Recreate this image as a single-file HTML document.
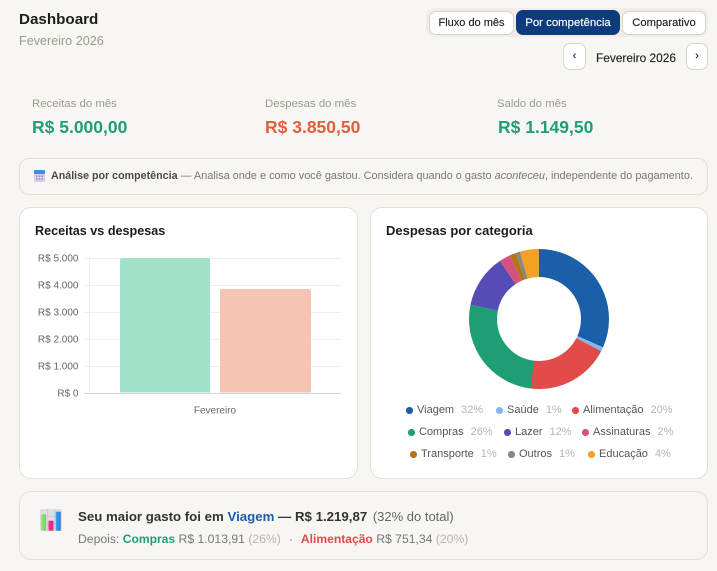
<!DOCTYPE html>
<html lang="pt-BR"><head><meta charset="utf-8"><title>Dashboard</title>
<style>
html,body{margin:0;padding:0;background:#f8f6f3;}
body{width:717px;height:571px;position:relative;overflow:hidden;font-family:"Liberation Sans",Arial,sans-serif;color:#1f1f1f;}
.a{position:absolute;white-space:nowrap;}
.box{position:absolute;box-sizing:border-box;border:1px solid #e2dfd8;}
.btn{position:absolute;box-sizing:border-box;background:#fff;border:1px solid #d8d4cc;border-radius:7px;text-align:center;font-size:11px;color:#1f1f1f;-webkit-text-stroke:.15px currentColor;}
.lab{font-size:11.4px;color:#9b9a95;line-height:16px;}
.val{font-size:17.5px;font-weight:700;line-height:22px;}
.leg{font-size:11px;color:#555;line-height:14px;}
.leg i{font-style:normal;color:#b5b5b0;margin-left:7px;}
.dot{position:absolute;width:6.5px;height:6.5px;border-radius:50%;}
</style></head><body>

<div class="a" style="left:19px;top:10px;font-size:15.2px;font-weight:700;line-height:20px;color:#1c1c1c;">Dashboard</div>
<div class="a" style="left:19px;top:33px;font-size:12.6px;line-height:16px;color:#9b9a95;">Fevereiro 2026</div>

<div class="a" style="left:426px;top:8px;width:282px;height:29px;background:#f0ede8;border-radius:8px;"></div>
<div class="btn" style="left:429px;top:11px;width:85px;height:24px;line-height:22px;">Fluxo do mês</div>
<div class="btn" style="left:516px;top:10px;width:104px;height:25px;line-height:24px;background:#0d3b7d;border-color:#0d3b7d;color:#fff;font-size:11.4px;">Por competência</div>
<div class="btn" style="left:622px;top:11px;width:84px;height:24px;line-height:22px;font-size:11.2px;">Comparativo</div>
<div class="btn" style="left:563px;top:43px;width:23px;height:27px;line-height:24px;">‹</div>
<div class="a" style="left:596px;top:50px;font-size:11.9px;line-height:16px;color:#1f1f1f;-webkit-text-stroke:.15px currentColor;">Fevereiro 2026</div>
<div class="btn" style="left:686px;top:43px;width:22px;height:27px;line-height:24px;">›</div>

<div class="a lab" style="left:32px;top:96px;">Receitas do mês</div>
<div class="a val" style="left:32px;top:116px;color:#1f9e78;">R$ 5.000,00</div>
<div class="a lab" style="left:265px;top:96px;">Despesas do mês</div>
<div class="a val" style="left:265px;top:116px;color:#e0603a;">R$ 3.850,50</div>
<div class="a lab" style="left:497px;top:96px;">Saldo do mês</div>
<div class="a val" style="left:498px;top:116px;color:#1f9e78;">R$ 1.149,50</div>

<div class="box" style="left:19px;top:158px;width:689px;height:37px;border-radius:10px;"></div>
<svg class="a" style="left:34px;top:170px;" width="11" height="12" viewBox="0 0 11 12">
<rect x="0" y="0" width="11" height="12" rx="1" fill="#d9cdea"/>
<rect x="0" y="0" width="11" height="4" rx="1" fill="#3f8cef"/>
<g fill="#8b86b8"><rect x="2" y="5.5" width="1.5" height="1.3"/><rect x="4.7" y="5.5" width="1.5" height="1.3"/><rect x="7.4" y="5.5" width="1.5" height="1.3"/><rect x="2" y="8.3" width="1.5" height="1.3"/><rect x="4.7" y="8.3" width="1.5" height="1.3"/><rect x="7.4" y="8.3" width="1.5" height="1.3"/></g>
</svg>
<div class="a" style="left:51px;top:168px;font-size:10.92px;line-height:16px;color:#777;"><b style="color:#4a4a4a;font-size:10.7px;">Análise por competência</b> — Analisa onde e como você gastou. Considera quando o gasto <em>aconteceu</em>, independente do pagamento.</div>

<div class="box" style="left:19px;top:207px;width:339px;height:272px;border-radius:12px;background:#fff;"></div>
<div class="a" style="left:35px;top:222px;font-size:12.6px;font-weight:700;line-height:18px;color:#1c1c1c;">Receitas vs despesas</div>

<svg class="a" style="left:30px;top:250px;" width="320" height="170" viewBox="30 250 320 170">
<g stroke="#f0eeea" stroke-width="1">
<path d="M84 258.5H341M84 285.5H341M84 312.5H341M84 339.5H341M84 366.5H341"/>
<path d="M89.5 258V393"/>
</g>
<path d="M84 393.5H341" stroke="#d6d4d2" stroke-width="1"/>
<path d="M120 392.5V260a2 2 0 0 1 2-2H208a2 2 0 0 1 2 2V392.5Z" fill="#a2e2cb"/>
<path d="M220 392.5V291a2 2 0 0 1 2-2H309a2 2 0 0 1 2 2V392.5Z" fill="#f5c4b3"/>
<g font-family="Liberation Sans,Arial,sans-serif" font-size="10" fill="#666" text-anchor="end">
<text x="78.5" y="261.5">R$ 5.000</text>
<text x="78.5" y="288.5">R$ 4.000</text>
<text x="78.5" y="315.5">R$ 3.000</text>
<text x="78.5" y="342.5">R$ 2.000</text>
<text x="78.5" y="369.5">R$ 1.000</text>
<text x="78.5" y="396.5">R$ 0</text>
</g>
<text x="215" y="413.5" font-family="Liberation Sans,Arial,sans-serif" font-size="10" fill="#666" text-anchor="middle">Fevereiro</text>
</svg>

<div class="box" style="left:370px;top:207px;width:338px;height:272px;border-radius:12px;background:#fff;"></div>
<div class="a" style="left:386px;top:222px;font-size:13px;font-weight:700;line-height:18px;color:#1c1c1c;">Despesas por categoria</div>

<svg class="a" style="left:459px;top:239px;" width="160" height="160" viewBox="-80 -80 160 160">
<g fill="none" stroke-width="28" transform="rotate(-90)">
<circle r="56" pathLength="360" stroke="#1a5fa8" stroke-dasharray="114 246" stroke-dashoffset="0"/>
<circle r="56" pathLength="360" stroke="#85b7eb" stroke-dasharray="3.4 356.6" stroke-dashoffset="-114"/>
<circle r="56" pathLength="360" stroke="#e24b4a" stroke-dasharray="70.2 289.8" stroke-dashoffset="-117.4"/>
<circle r="56" pathLength="360" stroke="#1d9e75" stroke-dasharray="94.8 265.2" stroke-dashoffset="-187.1"/>
<circle r="56" pathLength="360" stroke="#574bb5" stroke-dasharray="44.4 315.6" stroke-dashoffset="-281.9"/>
<circle r="56" pathLength="360" stroke="#d4527f" stroke-dasharray="9.2 350.8" stroke-dashoffset="-326.3"/>
<circle r="56" pathLength="360" stroke="#b8731a" stroke-dasharray="5.3 354.7" stroke-dashoffset="-335.5"/>
<circle r="56" pathLength="360" stroke="#888780" stroke-dasharray="3.6 356.4" stroke-dashoffset="-340.8"/>
<circle r="56" pathLength="360" stroke="#f2a026" stroke-dasharray="15.6 344.4" stroke-dashoffset="-344.4"/>
</g>
</svg>

<span class="dot" style="left:406px;top:407px;background:#1a5fa8;"></span><div class="a leg" style="left:417px;top:403px;">Viagem<i>32%</i></div>
<span class="dot" style="left:496px;top:407px;background:#85b7eb;"></span><div class="a leg" style="left:507px;top:403px;">Saúde<i>1%</i></div>
<span class="dot" style="left:572px;top:407px;background:#e24b4a;"></span><div class="a leg" style="left:583px;top:403px;">Alimentação<i>20%</i></div>
<span class="dot" style="left:408px;top:429px;background:#1d9e75;"></span><div class="a leg" style="left:419px;top:425px;">Compras<i>26%</i></div>
<span class="dot" style="left:504px;top:429px;background:#574bb5;"></span><div class="a leg" style="left:515px;top:425px;">Lazer<i>12%</i></div>
<span class="dot" style="left:582px;top:429px;background:#d4527f;"></span><div class="a leg" style="left:593px;top:425px;">Assinaturas<i>2%</i></div>
<span class="dot" style="left:410px;top:451px;background:#b8731a;"></span><div class="a leg" style="left:421px;top:447px;">Transporte<i>1%</i></div>
<span class="dot" style="left:508px;top:451px;background:#888780;"></span><div class="a leg" style="left:519px;top:447px;">Outros<i>1%</i></div>
<span class="dot" style="left:588px;top:451px;background:#f2a026;"></span><div class="a leg" style="left:599px;top:447px;">Educação<i>4%</i></div>

<div class="box" style="left:19px;top:491px;width:689px;height:69px;border-radius:12px;"></div>
<svg class="a" style="left:40px;top:509px;" width="22" height="22" viewBox="0 0 22 22">
<defs>
<linearGradient id="g1" x1="0" x2="1" y1="0" y2="0"><stop offset="0" stop-color="#b5e05a"/><stop offset="1" stop-color="#5fd08a"/></linearGradient>
<linearGradient id="g2" x1="0" x2="1" y1="0" y2="0"><stop offset="0" stop-color="#f0307a"/><stop offset="1" stop-color="#d8308c"/></linearGradient>
<linearGradient id="g3" x1="0" x2="1" y1="0" y2="0"><stop offset="0" stop-color="#38a8f0"/><stop offset="1" stop-color="#2a78d8"/></linearGradient>
</defs>
<rect width="22" height="22" rx="2" fill="#e0dce2"/>
<path d="M7.3 0V22M14.6 0V22M0 7.3H22M0 14.6H22" stroke="#cbc6cf" stroke-width=".8"/>
<rect x="1" y="5.3" width="5" height="16.4" fill="url(#g1)"/>
<rect x="8.5" y="11.7" width="5" height="10" fill="url(#g2)"/>
<rect x="15.7" y="2.7" width="5" height="19" fill="url(#g3)"/>
</svg>
<div class="a" style="left:78px;top:509px;font-size:13px;line-height:16px;color:#666;"><b style="color:#333;font-size:13.25px;">Seu maior gasto foi em <span style="color:#1a5fa8;">Viagem</span> — R$ 1.219,87</b> <span style="margin-left:2px;">(32% do total)</span></div>
<div class="a" style="left:78px;top:531px;font-size:12.2px;line-height:16px;color:#777;">Depois: <b style="color:#1d9e75;font-size:12.1px;">Compras</b> R$ 1.013,91 <span style="color:#b5b5b0;">(26%)</span><span style="margin:0 8px;">·</span><b style="color:#e24b4a;font-size:12.1px;">Alimentação</b> R$ 751,34 <span style="color:#b5b5b0;">(20%)</span></div>

</body></html>
